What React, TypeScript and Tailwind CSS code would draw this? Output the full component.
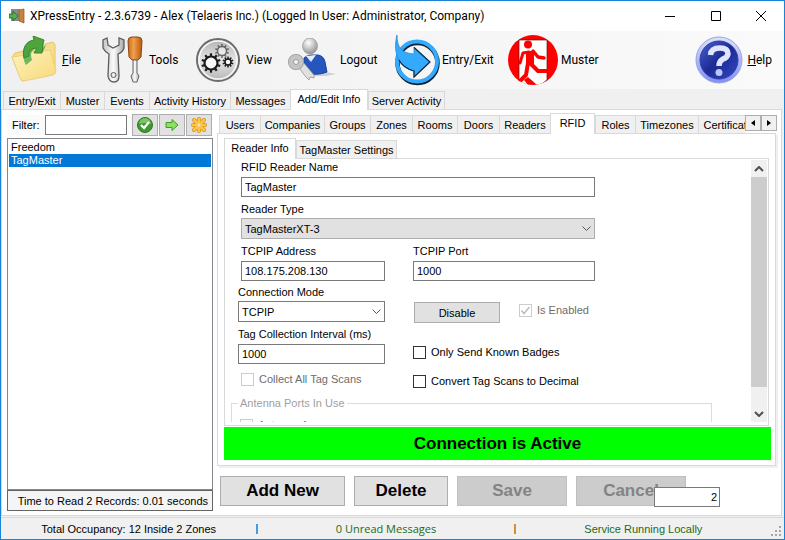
import { useState } from 'react';
import type { ReactNode } from 'react';
import clsx from 'clsx';

type TabDef = { label: string; width: string };

const MAIN_TABS: TabDef[] = [
  { label: 'Entry/Exit', width: 'w-[57px]' },
  { label: 'Muster', width: 'w-[44px]' },
  { label: 'Events', width: 'w-[45px]' },
  { label: 'Activity History', width: 'w-[81px]' },
  { label: 'Messages', width: 'w-[60px]' },
  { label: 'Add/Edit Info', width: 'w-[78px]' },
  { label: 'Server Activity', width: 'w-[77px]' },
];

const SECTION_TABS: TabDef[] = [
  { label: 'Users', width: 'w-[41px]' },
  { label: 'Companies', width: 'w-[64px]' },
  { label: 'Groups', width: 'w-[46px]' },
  { label: 'Zones', width: 'w-[42px]' },
  { label: 'Rooms', width: 'w-[45px]' },
  { label: 'Doors', width: 'w-[42px]' },
  { label: 'Readers', width: 'w-[51px]' },
  { label: 'RFID', width: 'w-[45px]' },
  { label: 'Roles', width: 'w-[40px]' },
  { label: 'Timezones', width: 'w-[63px]' },
  { label: 'Certificates', width: 'w-[66px]' },
];

const READER_TABS: TabDef[] = [
  { label: 'Reader Info', width: 'w-[72px]' },
  { label: 'TagMaster Settings', width: 'w-[101px]' },
];

const READERS = ['Freedom', 'TagMaster'];

function Tabs({ tabs, initial }: { tabs: TabDef[]; initial: string }) {
  const [active, setActive] = useState(initial);
  return (
    // Sits 1px over the panel below so the active tab hides its top border.
    <div role="tablist" className="relative z-10 -mb-px flex h-[21px] min-w-0 flex-1 items-end overflow-hidden">
      {tabs.map((t) => {
        const on = t.label === active;
        return (
          <button
            key={t.label}
            type="button"
            role="tab"
            aria-selected={on}
            onClick={() => setActive(t.label)}
            className={clsx(
              'shrink-0 whitespace-nowrap border-[#d9d9d9] text-center',
              t.width,
              on ? 'h-[21px] border-x border-t bg-white pb-[2px]' : 'h-[19px] border-y border-l bg-[#f0f0f0] last:border-r',
            )}
          >
            {t.label}
          </button>
        );
      })}
    </div>
  );
}

function FolderIcon() {
  return (
    <svg width="48" height="48" viewBox="0 0 48 48" aria-hidden="true">
      <defs>
        <linearGradient id="folder" x1="0" y1="0" x2="1" y2="1">
          <stop offset="0" stopColor="#fdf3c0" />
          <stop offset="1" stopColor="#f8d978" />
        </linearGradient>
      </defs>
      <path d="M2 21 L5 17 L14 15 L18 17 L32 9 L43 6 L45 9 L45 36 L12 45 Z" fill="#f6dd8c" stroke="#e6c566" />
      <path d="M2 21 L16 19 L19 16 L40 14 L46 34 Q46 38 43 39 L14 45 Q11 45 10 42 Z" fill="url(#folder)" stroke="#ecd07a" />
      <path d="M16 29 C10 17 13 7 24 5 L24 1 L31 3 L33 11 L36 9 L33 16 L25 17 L28 12 C21 13 20 18 22 24 Z" fill="#6fb75a" />
      <path d="M14 22 C12 12 16 5 24 4 L23 0 L34 4 L33 8 L32 17 L24 17 L27 12 C20 12 18 17 19 20 Z" fill="#4fa53b" stroke="#398530" />
    </svg>
  );
}

function ToolsIcon() {
  return (
    <svg width="44" height="48" viewBox="0 0 44 48" aria-hidden="true">
      <defs>
        <linearGradient id="steel" x1="0" y1="0" x2="1" y2="0">
          <stop offset="0" stopColor="#c4c4c4" />
          <stop offset="0.5" stopColor="#fafafa" />
          <stop offset="1" stopColor="#a8a8a8" />
        </linearGradient>
        <linearGradient id="handle" x1="0" y1="0" x2="1" y2="0">
          <stop offset="0" stopColor="#c76a1c" />
          <stop offset="0.4" stopColor="#f0a04a" />
          <stop offset="1" stopColor="#b8570e" />
        </linearGradient>
      </defs>
      <path
        d="M6 2 L2 4 L2 12 Q4 16 8 18 L7 40 Q8 46 13 46 Q18 46 18 40 L17 18 Q22 16 23 12 L23 4 L18 2 L18 9 L12 12 L7 9 Z"
        fill="url(#steel)"
        stroke="#5d5d5d"
        strokeWidth="1.3"
      />
      <circle cx="12.500" cy="39" r="2.500" fill="#eee" stroke="#5a5a5a" />
      <path d="M27 5 Q27 1 31 1 L37 1 Q41 1 41 5 L40 21 L37 24 L31 24 L28 21 Z" fill="url(#handle)" stroke="#8d4711" />
      <path d="M32 24 H36 V37 L38 40 L36 46 H32 L30 40 L32 37 Z" fill="url(#steel)" stroke="#666" />
    </svg>
  );
}

function Gear({ x, y, r, w }: { x: number; y: number; r: number; w: number }) {
  return (
    <g transform={`translate(${x} ${y})`} fill="none" stroke="#1c1c1c">
      {[0, 36, 72, 108, 144, 180, 216, 252, 288, 324].map((a) => (
        <path key={a} d={`M0 ${-r} V${-r - w - 1}`} strokeWidth={w} transform={`rotate(${a})`} />
      ))}
      <circle r={r} strokeWidth={w} fill="#f8f8f8" />
    </g>
  );
}

function ViewIcon() {
  return (
    <svg width="46" height="46" viewBox="0 0 46 46" aria-hidden="true">
      <defs>
        <linearGradient id="disc" x1="0" y1="0" x2="0" y2="1">
          <stop offset="0" stopColor="#b0b0b0" />
          <stop offset="0.5" stopColor="#e6e6e6" />
          <stop offset="1" stopColor="#b5b5b5" />
        </linearGradient>
      </defs>
      <circle cx="23" cy="23" r="21" fill="url(#disc)" stroke="#6c6c6c" strokeWidth="2" />
      <circle cx="23" cy="23" r="19" fill="none" stroke="#f8f8f8" strokeWidth="1.500" />
      <g opacity="0.6">
        <Gear x={27} y={14} r={4.5} w={1.5} />
      </g>
      <Gear x={16} y={26} r={6.5} w={2.2} />
      <Gear x={33} y={25} r={3} w={1.5} />
    </svg>
  );
}

function LogoutIcon() {
  return (
    <svg width="48" height="44" viewBox="0 0 48 44" aria-hidden="true">
      <defs>
        <radialGradient id="head" cx="0.4" cy="0.3" r="0.8">
          <stop offset="0" stopColor="#ffffff" />
          <stop offset="1" stopColor="#858585" />
        </radialGradient>
      </defs>
      <path d="M18 38 L38 34 L48 36 L38 38 Z" fill="#d0d0d0" />
      <path d="M16 20 Q18 18 22 17 L30 17 Q36 18 37 24 L39 34 Q30 38 16 35 Z" fill="#2555bd" stroke="#1c43a0" />
      <path d="M18 18 L23 24 L28 17 Z" fill="#e6ecf8" />
      <ellipse cx="22" cy="8" rx="7.500" ry="8" fill="url(#head)" stroke="#999" strokeWidth="0.700" />
      <path d="M10 28 L15 24 L26 37 L26 40 L22 39 L21 42 L17 38 Z" fill="#e0e0e0" stroke="#8a8a8a" strokeWidth="0.700" />
      <circle cx="8" cy="24" r="5" fill="none" stroke="#989898" strokeWidth="6" />
      <circle cx="8" cy="24" r="5" fill="none" stroke="#c4c4c4" strokeWidth="4.500" />
    </svg>
  );
}

function EntryIcon() {
  return (
    <svg width="46" height="52" viewBox="0 0 46 52" aria-hidden="true">
      <circle cx="23.500" cy="29" r="20" fill="none" stroke="#0d2233" strokeWidth="4.500" />
      <circle cx="23" cy="27.500" r="20" fill="none" stroke="#33aaff" strokeWidth="4" />
      <path d="M3 1 C3 14 8 19 20 20 L20 13 L36 28 L20 43 L20 37 C6 34 -2 20 3 1 Z" fill="#33aaff" stroke="#2684c8" strokeWidth="0.700" />
      <path d="M20 13.500 L36 28 L20 43 L20 37 C13 35 8 32 5 26" fill="none" stroke="#102b40" strokeWidth="1.200" />
    </svg>
  );
}

function MusterIcon() {
  return (
    <svg width="50" height="50" viewBox="0 0 50 50" aria-hidden="true">
      <defs>
        <clipPath id="muster-disc">
          <circle cx="25" cy="25" r="25" />
        </clipPath>
      </defs>
      <g clipPath="url(#muster-disc)">
        <rect width="50" height="50" fill="#fe0000" />
        <path d="M11 5 H39 V45 L30 52 H11 Z" fill="#fff" stroke="#611" strokeWidth="0.700" />
        <g fill="none" stroke="#fe0000" strokeLinejoin="round">
          <path d="M21 17 L15 18 L12 28" strokeWidth="3" strokeLinecap="round" />
          <path d="M25 16 L30 22 L36 23" strokeWidth="3.500" strokeLinecap="round" />
          <path d="M22 16 L22 29" strokeWidth="8" />
          <path d="M22 28 L30 36 L43 36" strokeWidth="4" />
          <path d="M20 28 L18 40 L11 47" strokeWidth="4" />
        </g>
        <circle cx="20" cy="9.500" r="4" fill="#fe0000" />
        <path d="M16 45 L20 42 L29 50 H20 Z" fill="#fe0000" />
      </g>
    </svg>
  );
}

function HelpIcon() {
  return (
    <svg width="48" height="48" viewBox="0 0 48 48" aria-hidden="true">
      <defs>
        <linearGradient id="ring" x1="0" y1="0" x2="0" y2="1">
          <stop offset="0" stopColor="#dce2fb" />
          <stop offset="1" stopColor="#7f8ff8" />
        </linearGradient>
        <linearGradient id="orb" x1="0" y1="0" x2="1" y2="1">
          <stop offset="0" stopColor="#4b62cf" />
          <stop offset="0.5" stopColor="#1c2a93" />
          <stop offset="1" stopColor="#3448c4" />
        </linearGradient>
      </defs>
      <circle cx="24" cy="24" r="23" fill="url(#ring)" stroke="#9aa3d8" />
      <circle cx="24" cy="24" r="19" fill="url(#orb)" stroke="#2c3da8" />
      <path d="M15.500 19 Q16 12 25 12 Q33 12 33 18 Q32 22 28 23 Q24 25 24 30" fill="none" stroke="#dfe5fc" strokeWidth="5.500" />
      <circle cx="24" cy="36.500" r="3.500" fill="#b9c6fb" />
    </svg>
  );
}

function AppIcon() {
  return (
    <svg width="16" height="16" viewBox="0 0 16 16" aria-hidden="true">
      <rect x="2" y="1" width="9" height="12" fill="#8a8a8a" />
      <path d="M10 2 L15 1 V15 L10 13 Z" fill="#c9823d" stroke="#8c5420" strokeWidth="0.700" />
      <path d="M0 6 H4 V3 L9 8 L4 13 V10 H0 Z" fill="#4fb04c" stroke="#25672a" strokeWidth="0.800" />
    </svg>
  );
}

function Chevron({ up }: { up?: boolean }) {
  return (
    <svg width="10" height="6" viewBox="0 0 10 6" fill="none" stroke="#505050" strokeWidth="2" aria-hidden="true">
      <path d={up ? 'M1 5 L5 1 L9 5' : 'M1 1 L5 5 L9 1'} />
    </svg>
  );
}

function ToolItem({ icon, className, children }: { icon: ReactNode; className: string; children: ReactNode }) {
  return (
    <button type="button" className={clsx('flex shrink-0 items-center', className)}>
      {icon}
      <span>{children}</span>
    </button>
  );
}

function Field({ id, label, value, className }: { id: string; label: string; value: string; className?: string }) {
  return (
    <div className={clsx('flex flex-col', className)}>
      <label htmlFor={id} className="h-[17px]">{label}</label>
      <input id={id} defaultValue={value} className="h-[20px] w-full border border-[#7a7a7a] bg-white px-[3px]" />
    </div>
  );
}

function Dropdown({ id, label, value, filled }: { id: string; label: string; value: string; filled?: boolean }) {
  return (
    <div className="flex flex-col">
      <label htmlFor={id} className="h-[16px]">{label}</label>
      <div className="relative">
        <select
          id={id}
          className={clsx(
            'block h-[21px] w-full appearance-none border px-[3px]',
            filled ? 'border-[#adadad] bg-[#e1e1e1]' : 'border-[#7a7a7a] bg-white',
          )}
        >
          <option>{value}</option>
        </select>
        <svg
          className="pointer-events-none absolute right-[4px] top-[8px]"
          width="9"
          height="6"
          viewBox="0 0 9 6"
          fill="none"
          stroke="#555"
          aria-hidden="true"
        >
          <path d="M0.500 0.500 L4.500 4.500 L8.500 0.500" />
        </svg>
      </div>
    </div>
  );
}

function Check({ label, checked, disabled, className }: { label: string; checked?: boolean; disabled?: boolean; className?: string }) {
  return (
    <label className={clsx('flex items-center gap-[5px]', disabled && 'text-[#6d6d6d]', className)}>
      <span className="relative flex">
        <input
          type="checkbox"
          defaultChecked={checked}
          disabled={disabled}
          className={clsx('peer size-[13px] appearance-none border bg-white', disabled ? 'border-[#cccccc]' : 'border-[#333333]')}
        />
        <svg
          className="pointer-events-none absolute inset-0 hidden peer-checked:block"
          width="13"
          height="13"
          viewBox="0 0 13 13"
          fill="none"
          stroke={disabled ? '#bcbcbc' : '#333'}
          strokeWidth="1.500"
          aria-hidden="true"
        >
          <path d="M2.500 6.500 L5 9.500 L10.500 3" />
        </svg>
      </span>
      {label}
    </label>
  );
}

function ReaderForm() {
  return (
    <div className="flex min-h-0 flex-1 border border-[#d9d9d9] p-[1px] pb-[3px]">
      <form className="min-w-0 flex-1 overflow-hidden pl-[5px] pt-px">
        <div className="flex flex-col gap-[4px] pl-[9px]">
          <div className="ml-px flex w-[354px] flex-col gap-[5px]">
            <Field id="reader-name" label="RFID Reader Name" value="TagMaster" className="-mt-px" />
            <Dropdown id="reader-type" label="Reader Type" value="TagMasterXT-3" filled />
          </div>
          <div className="flex gap-[28px]">
            <div className="-ml-[2px] flex w-[147px] shrink-0 flex-col gap-[4px]">
              <div className="pl-[3px] pt-px">
                <Field id="tcp-address" label="TCPIP Address" value="108.175.208.130" />
              </div>
              <Dropdown id="mode" label="Connection Mode" value="TCPIP" />
              <Field id="interval" label="Tag Collection Interval (ms)" value="1000" className="pt-px" />
              <Check label="Collect All Tag Scans" disabled className="pl-[3px] pt-[4px]" />
            </div>
            <div className="flex w-[182px] shrink-0 flex-col pt-px">
              <Field id="tcp-port" label="TCPIP Port" value="1000" />
              <div className="flex gap-[19px] pl-px pt-[21px]">
                <button type="button" className="h-[21px] w-[86px] shrink-0 border border-[#adadad] bg-[#e1e1e1]">Disable</button>
                <Check label="Is Enabled" checked disabled className="h-[16px] whitespace-nowrap" />
              </div>
              <div className="flex flex-col gap-[15px] pt-[22px]">
                <Check label="Only Send Known Badges" />
                <Check label="Convert Tag Scans to Decimal" />
              </div>
            </div>
          </div>
        </div>
        <fieldset className="mt-[8px] h-[80px] w-[481px] border border-[#dcdcdc] px-[8px]">
          <legend className="-ml-[2px] px-[2px] text-[#a0a0a0]">Antenna Ports In Use</legend>
          <Check label="Antenna 1" checked disabled className="pt-[8px]" />
        </fieldset>
      </form>
      <div className="flex w-[16px] flex-col bg-[#f0f0f0]">
        <button type="button" aria-label="Scroll up" className="flex h-[17px] items-center justify-center">
          <Chevron up />
        </button>
        <div className="flex-1 bg-[#cdcdcd]" />
        <div className="h-[18px]" />
        <button type="button" aria-label="Scroll down" className="flex h-[17px] items-center justify-center">
          <Chevron />
        </button>
      </div>
    </div>
  );
}

function Sidebar() {
  const [selected, setSelected] = useState('TagMaster');
  const iconBtn = 'flex h-[22px] w-[26px] items-center justify-center border border-[#adadad] bg-[#e1e1e1]';
  return (
    <aside className="flex w-[206px] shrink-0 flex-col">
      <div className="flex h-[28px] items-center pr-px pt-[2px]">
        <div className="flex flex-1 items-center gap-[5px] bg-[#fafafa] pl-[5px]">
          <label htmlFor="filter">Filter:</label>
          <input id="filter" className="h-[20px] w-[82px] border border-[#7a7a7a] bg-white px-[3px]" />
        </div>
        <div className="flex gap-px">
          <button type="button" aria-label="Apply filter" className={iconBtn}>
            <svg width="16" height="16" viewBox="0 0 16 16" aria-hidden="true">
              <circle cx="8" cy="8" r="7.500" fill="#3f9a2e" stroke="#2f7a22" />
              <path d="M2 7 A6 6 0 0 1 14 7 Q8 5 2 7 Z" fill="#7cc268" />
              <path d="M4 8 L7 11 L12 5" fill="none" stroke="#fff" strokeWidth="2.200" />
            </svg>
          </button>
          <button type="button" aria-label="Next" className={iconBtn}>
            <svg width="14" height="14" viewBox="0 0 14 14" aria-hidden="true">
              <path d="M1 4.500 H7 V1.500 L13 7 L7 12.500 V9.500 H1 Z" fill="#8ee05f" stroke="#3f9a2e" />
            </svg>
          </button>
          <button type="button" aria-label="Clear filter" className={iconBtn}>
            <svg width="18" height="18" viewBox="0 0 18 18" fill="none" strokeLinecap="round" aria-hidden="true">
              <path d="M9 3 V15 M3 9 H15 M4 4 L14 14 M14 4 L4 14" stroke="#dd9216" strokeWidth="4" />
              <path d="M9 3 V15 M3 9 H15 M4 4 L14 14 M14 4 L4 14" stroke="#fcc548" strokeWidth="2.500" />
              <circle cx="9" cy="9" r="1.500" fill="#e8e2d0" />
            </svg>
          </button>
        </div>
      </div>
      <ul role="listbox" aria-label="Readers" className="flex-1 border border-[#828790] px-px py-[2px]">
        {READERS.map((name) => (
          <li
            key={name}
            role="option"
            aria-selected={name === selected}
            onClick={() => setSelected(name)}
            className={clsx('h-[13px] px-[2px] leading-[13px]', name === selected && 'bg-[#0078d7] text-white')}
          >
            {name}
          </li>
        ))}
      </ul>
      <div className="flex h-[21px] items-center justify-end border border-[#646464] bg-[#f5f5f5] px-[4px]">
        Time to Read 2 Records: 0.01 seconds
      </div>
    </aside>
  );
}

export default function App() {
  const bigBtn = 'h-[30px] shrink-0 border text-[17px] font-bold';
  return (
    <div className="flex h-screen min-h-[540px] flex-col border border-[#1883d7] bg-[#f0f0f0] font-['Liberation_Sans',Arial,sans-serif] text-[11px] leading-[14px] text-black">
      <header className="flex h-[30px] shrink-0 items-center bg-white pl-[8px] font-[Roboto,'Open_Sans',sans-serif] text-[12px]">
        <AppIcon />
        <h1 className="flex-1 whitespace-nowrap pl-[5px]">
          XPressEntry - 2.3.6739 - Alex (Telaeris Inc.) (Logged In User: Administrator, Company)
        </h1>
        <button type="button" aria-label="Minimize" className="flex h-full w-[46px] items-center justify-center">
          <svg width="10" height="10" viewBox="0 0 10 10" stroke="#000"><path d="M0 5.500 H10" /></svg>
        </button>
        <button type="button" aria-label="Maximize" className="flex h-full w-[45px] items-center justify-center">
          <svg width="10" height="10" viewBox="0 0 10 10" stroke="#000" fill="none"><path d="M0.500 0.500 H9.500 V9.500 H0.500 Z" /></svg>
        </button>
        <button type="button" aria-label="Close" className="flex h-full w-[46px] items-center justify-center">
          <svg width="10" height="10" viewBox="0 0 10 10" stroke="#000"><path d="M0 0 L10 10 M10 0 L0 10" /></svg>
        </button>
      </header>

      <nav className="flex h-[58px] shrink-0 items-center bg-linear-to-r from-[#f0f0f0] to-[#fafafa] pl-[9px] pr-[12px] font-[Roboto,'Open_Sans',sans-serif] text-[12px]">
        <ToolItem icon={<FolderIcon />} className="w-[91px] gap-[4px]"><u>F</u>ile</ToolItem>
        <ToolItem icon={<ToolsIcon />} className="w-[94px] gap-[4px]">Tools</ToolItem>
        <ToolItem icon={<ViewIcon />} className="w-[93px] gap-[5px]">View</ToolItem>
        <ToolItem icon={<LogoutIcon />} className="w-[106px] gap-[4px]">Logout</ToolItem>
        <ToolItem icon={<EntryIcon />} className="w-[114px] gap-[2px]">Entry/Exit</ToolItem>
        <ToolItem icon={<MusterIcon />} className="gap-[3px]">Muster</ToolItem>
        <ToolItem icon={<HelpIcon />} className="ml-auto gap-[4px]"><u>H</u>elp</ToolItem>
      </nav>

      <div className="flex pl-[2px]">
        <Tabs tabs={MAIN_TABS} initial="Add/Edit Info" />
      </div>
      <main className="mb-px mr-[2px] flex min-h-0 flex-1 gap-[4px] border border-[#d9d9d9] bg-white pb-[4px] pl-[5px] pr-[4px]">
        <Sidebar />
        <section className="flex min-w-0 flex-1 flex-col pt-[3px]">
          <div className="flex pl-[2px]">
            <Tabs tabs={SECTION_TABS} initial="RFID" />
            <div className="flex pt-[2px]">
              <button type="button" aria-label="Scroll tabs left" className="flex h-[16px] w-[16px] items-center justify-center border border-[#adadad] bg-[#f0f0f0]">
                <svg width="4" height="6" viewBox="0 0 4 6"><path d="M4 0 V6 L0 3 Z" /></svg>
              </button>
              <button type="button" aria-label="Scroll tabs right" className="flex h-[16px] w-[16px] items-center justify-center border border-[#adadad] bg-[#f0f0f0]">
                <svg width="4" height="6" viewBox="0 0 4 6"><path d="M0 0 V6 L4 3 Z" /></svg>
              </button>
            </div>
          </div>
          <div className="mr-px flex min-h-0 flex-1 flex-col border border-[#d9d9d9] pb-[5px] pl-[6px] pr-[4px] pt-[4px] shadow-[2px_2px_0_#f0f0f0]">
            <div className="flex">
              <Tabs tabs={READER_TABS} initial="Reader Info" />
            </div>
            <div className="mr-[2px] flex min-h-0 flex-1 flex-col">
              <ReaderForm />
            </div>
            <div role="status" className="mt-px flex h-[33px] shrink-0 items-center justify-center bg-[#00ff00] text-[17px] font-bold">
              Connection is Active
            </div>
          </div>
          <div className="relative mb-[5px] mt-[10px] flex gap-[9px] pl-[3px]">
            <button type="button" className={clsx(bigBtn, 'w-[125px] border-[#adadad] bg-[#e1e1e1]')}>Add New</button>
            <button type="button" className={clsx(bigBtn, 'w-[94px] border-[#adadad] bg-[#e1e1e1]')}>Delete</button>
            <button type="button" disabled className={clsx(bigBtn, 'w-[110px] border-[#bfbfbf] bg-[#cccccc] text-[#838383]')}>Save</button>
            <button type="button" disabled className={clsx(bigBtn, 'w-[110px] border-[#bfbfbf] bg-[#cccccc] text-[#838383]')}>Cancel</button>
            <input
              aria-label="Record id"
              defaultValue="2"
              className="absolute left-[437px] top-[11px] h-[20px] w-[66px] border border-[#7a7a7a] bg-white px-[2px] text-right"
            />
          </div>
        </section>
      </main>

      <footer className="flex h-[22px] shrink-0 items-center border-t border-[#d9d9d9] text-center">
        <span className="flex-1">Total Occupancy: 12 Inside 2 Zones</span>
        <span className="h-[10px] w-[2px] bg-[#4a9be0]" />
        <span className="flex-1 font-['Open_Sans','Noto_Sans',sans-serif] text-[#1b6b1b]">0 Unread Messages</span>
        <span className="h-[10px] w-[2px] bg-[#d98c3a]" />
        <span className="flex-1 text-[#1b6b1b]">Service Running Locally</span>
        <svg className="mr-px mt-[6px]" width="12" height="12" viewBox="0 0 12 12" fill="#a6a6a6" aria-hidden="true">
          <path d="M8 0h2v2h-2z M4 4h2v2h-2z M8 4h2v2h-2z M0 8h2v2h-2z M4 8h2v2h-2z M8 8h2v2h-2z" />
        </svg>
      </footer>
    </div>
  );
}
